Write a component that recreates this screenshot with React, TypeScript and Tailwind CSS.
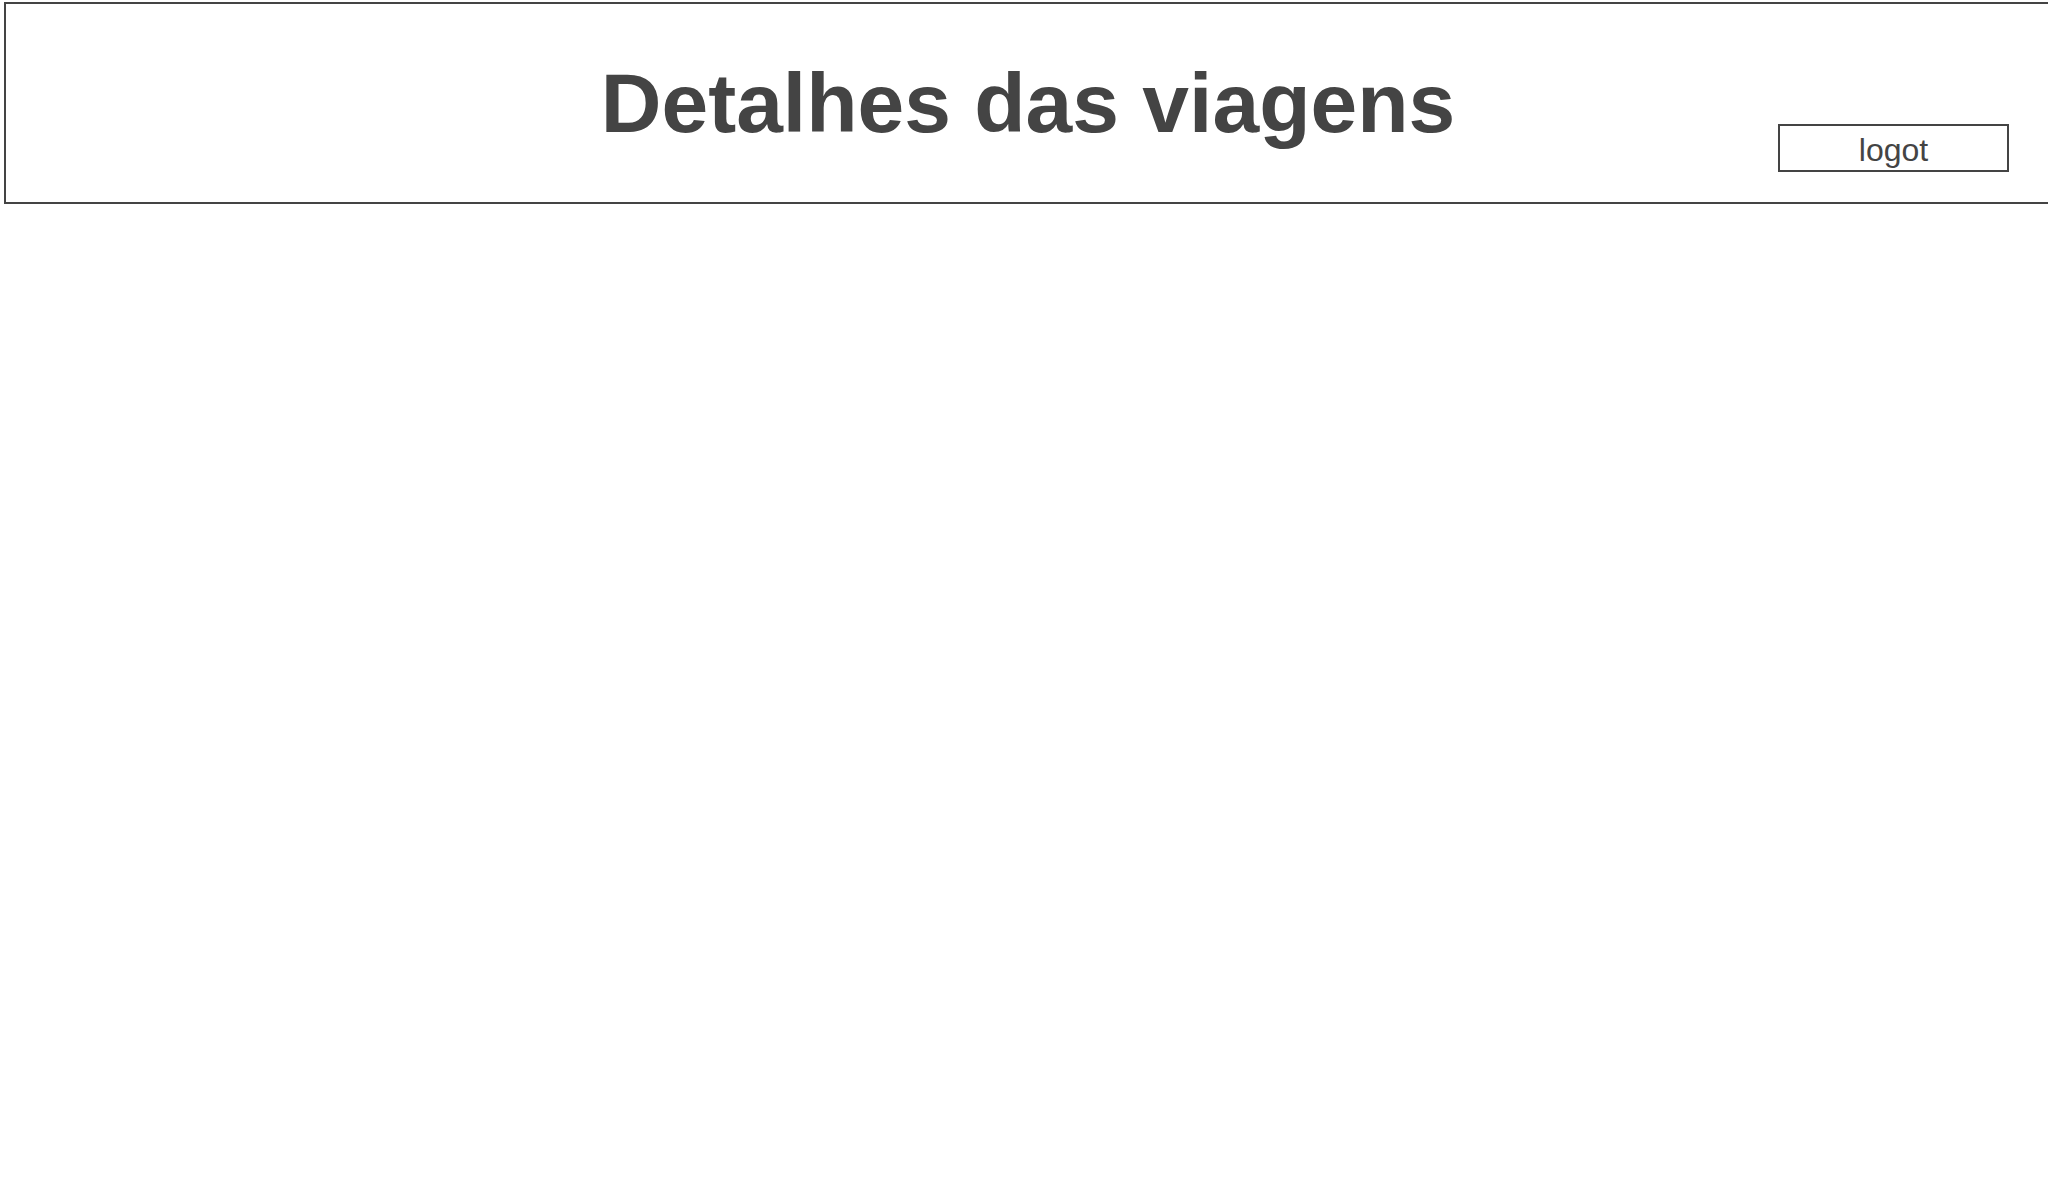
import React from 'react';

const Header: React.FC = () => {
    const handleLogout = () => {
        console.log('logout');
    };

    return (
        <header className="ml-[4px] mt-[2px] box-border h-[202px] w-full border-2 border-[#444444] bg-white grid grid-cols-[1fr_auto_1fr]">
            <div />
            <h1 className="pt-[52px] text-center text-[84px] font-bold leading-[95px] text-[#444444] whitespace-nowrap">
                Detalhes das viagens
            </h1>
            <div className="flex items-start justify-end pr-[41px] pt-[120px]">
                <button
                    onClick={handleLogout}
                    className="box-border flex h-[48px] w-[231px] items-center justify-center border-2 border-[#444444] bg-white pt-[3px] text-[32px] leading-none text-[#444444]"
                >
                    logot
                </button>
            </div>
        </header>
    );
};

export default function App() {
    return (
        <div
            className="min-h-screen w-full overflow-hidden bg-white"
            style={{ fontFamily: '"Liberation Sans", Arial, sans-serif' }}
        >
            <Header />
        </div>
    );
}
